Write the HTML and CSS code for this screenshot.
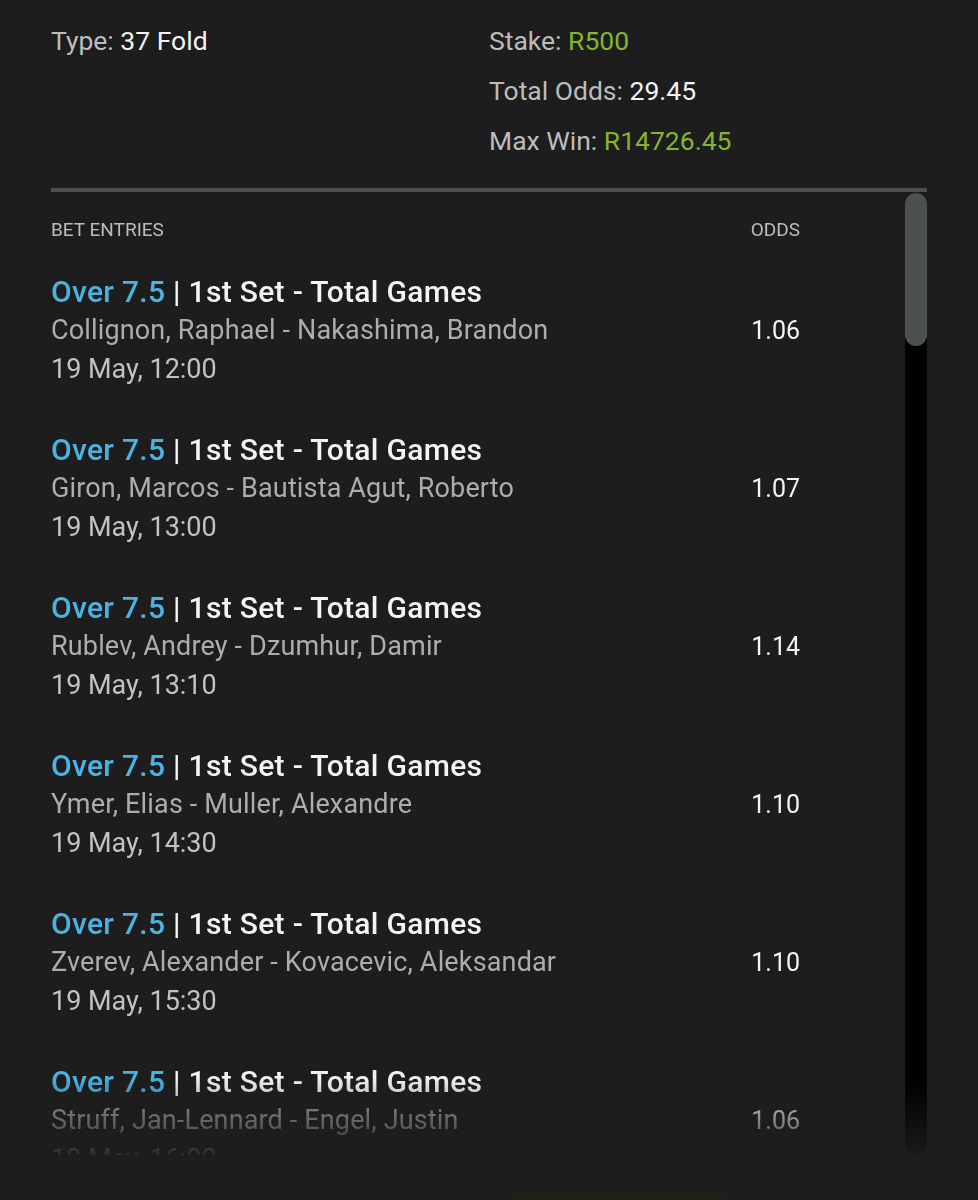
FILE: index.html
```html
<html lang="en">
<head>
  <meta charset="UTF-8" />
  <meta name="viewport" content="width=device-width, initial-scale=1.0" />
  <title>Bet Slip</title>
  <link rel="stylesheet" href="styles.css">
</head>
<body>
  <div class="summary">
    <div class="summary-col">
      <div class="line"><span class="label">Type:</span> <span class="value">37 Fold</span></div>
    </div>
    <div class="summary-col">
      <div class="line"><span class="label">Stake:</span> <span class="value green">R500</span></div>
      <div class="line"><span class="label">Total Odds:</span> <span class="value">29.45</span></div>
      <div class="line"><span class="label">Max Win:</span> <span class="value green">R14726.45</span></div>
    </div>
  </div>

  <div class="panel">
    <div class="entries">
      <div class="entries-head">
        <span>Bet Entries</span>
        <span>Odds</span>
      </div>

      <div class="entry">
        <div class="entry-info">
          <div class="market"><span class="pick">Over 7.5</span> | 1st Set - Total Games</div>
          <div class="match">Collignon, Raphael - Nakashima, Brandon</div>
          <div class="date">19 May, 12:00</div>
        </div>
        <div class="odds">1.06</div>
      </div>

      <div class="entry">
        <div class="entry-info">
          <div class="market"><span class="pick">Over 7.5</span> | 1st Set - Total Games</div>
          <div class="match">Giron, Marcos - Bautista Agut, Roberto</div>
          <div class="date">19 May, 13:00</div>
        </div>
        <div class="odds">1.07</div>
      </div>

      <div class="entry">
        <div class="entry-info">
          <div class="market"><span class="pick">Over 7.5</span> | 1st Set - Total Games</div>
          <div class="match">Rublev, Andrey - Dzumhur, Damir</div>
          <div class="date">19 May, 13:10</div>
        </div>
        <div class="odds">1.14</div>
      </div>

      <div class="entry">
        <div class="entry-info">
          <div class="market"><span class="pick">Over 7.5</span> | 1st Set - Total Games</div>
          <div class="match">Ymer, Elias - Muller, Alexandre</div>
          <div class="date">19 May, 14:30</div>
        </div>
        <div class="odds">1.10</div>
      </div>

      <div class="entry">
        <div class="entry-info">
          <div class="market"><span class="pick">Over 7.5</span> | 1st Set - Total Games</div>
          <div class="match">Zverev, Alexander - Kovacevic, Aleksandar</div>
          <div class="date">19 May, 15:30</div>
        </div>
        <div class="odds">1.10</div>
      </div>

      <div class="entry">
        <div class="entry-info">
          <div class="market"><span class="pick">Over 7.5</span> | 1st Set - Total Games</div>
          <div class="match">Struff, Jan-Lennard - Engel, Justin</div>
          <div class="date">19 May, 16:00</div>
        </div>
        <div class="odds">1.06</div>
      </div>
    </div>

    <div class="scrollbar">
      <div class="thumb"></div>
    </div>
  </div>

  <!-- top edge of the button under the slip, barely visible -->
  <div class="footer">
    <div class="button-peek"></div>
  </div>
</body>
</html>
```

FILE: styles.css
```css
:root {
  --bg: #1d1d1d;
  --label: #bcbcbc;
  --white: #f4f4f4;
  --green: #85b52c;
  --blue: #4bb2e2;
  --muted: #adadad;
  --divider: #4a5050;
}

body {
  margin: 0;
  background-color: var(--bg);
  font-family: Roboto, "Noto Sans", sans-serif;
  color: var(--white);
  overflow: hidden;
}

/* ---------- summary ---------- */
.summary {
  display: flex;
  margin: 0 51px;
  padding: 16px 0 22px 0;
  border-bottom: 4px solid var(--divider);
}

.summary-col {
  width: 438px;
}

.line {
  font-size: 26.5px;
  line-height: 50px;
  white-space: nowrap;
}

.label {
  color: var(--label);
}

.value {
  color: var(--white);
}

.value.green {
  color: var(--green);
}

/* ---------- entries panel ---------- */
.panel {
  display: flex;
  margin: 0 51px;
  height: 963px;
  overflow: hidden;
  -webkit-mask-image: linear-gradient(to bottom, #000 0, #000 885px, rgba(0, 0, 0, 0.1) 100%);
  mask-image: linear-gradient(to bottom, #000 0, #000 885px, rgba(0, 0, 0, 0.1) 100%);
}

.entries {
  flex: 1;
  padding: 28px 105px 0 0;
}

.entries-head {
  display: flex;
  justify-content: space-between;
  font-size: 19px;
  line-height: 20px;
  text-transform: uppercase;
  color: var(--label);
  margin-bottom: 32px;
}

.entry {
  display: flex;
  justify-content: space-between;
  align-items: center;
  margin-bottom: 41px;
}

.market {
  font-size: 30px;
  line-height: 39px;
  font-weight: 500;
  letter-spacing: 0.3px;
  color: var(--white);
  white-space: nowrap;
}

.pick {
  color: var(--blue);
}

.match {
  font-size: 27px;
  line-height: 39px;
  letter-spacing: 0.15px;
  color: var(--muted);
  white-space: nowrap;
}

.date {
  font-size: 27px;
  line-height: 39px;
  color: #c2c2c2;
}

.odds {
  font-size: 25px;
  color: var(--white);
}

.scrollbar {
  width: 22px;
  margin-top: 1px;
  background: #000;
  border-radius: 11px;
}

.thumb {
  height: 153px;
  background: #4b5151;
  border-radius: 11px;
}

/* ---------- footer peek ---------- */
.footer {
  padding: 35px 0 0 510px;
}

.button-peek {
  width: 217px;
  height: 12px;
  border-radius: 4px 4px 0 0;
  background: linear-gradient(to bottom, rgba(50, 40, 14, 0), rgba(50, 40, 14, 0.35));
}
```
